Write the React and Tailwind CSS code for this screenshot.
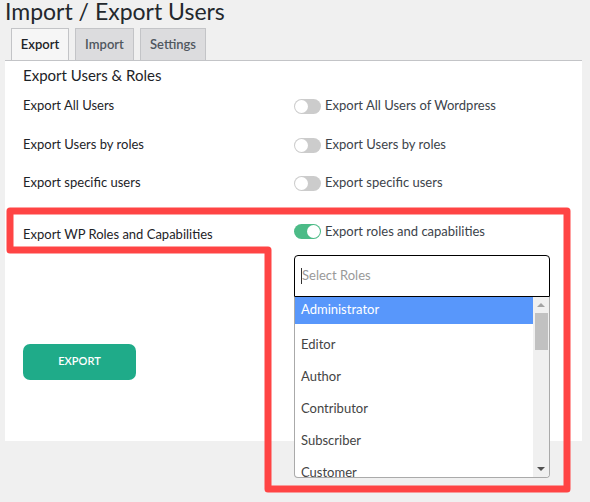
import React from 'react';

const font = { fontFamily: 'Lato, "Noto Sans", Arial, sans-serif' };

function Toggle({ on }) {
    return (
        <span className={'relative inline-block w-[27px] h-[15px] rounded-full shrink-0 ' + (on ? 'bg-[#4cbb87]' : 'bg-[#cccccc]')}>
            <span className={'absolute top-[1px] w-[13px] h-[13px] rounded-full bg-white ' + (on ? 'right-[1px]' : 'left-[1px]')} />
        </span>
    );
}

function Option({ label, text }) {
    return (
        <div className='flex items-center h-[32px]'>
            <span className='w-[271px] shrink-0 text-[13px] text-[#1d2327]'>{label}</span>
            <span className='flex items-center gap-[4px] text-[13px] text-[#3c434a]'>
                <Toggle />
                {text}
            </span>
        </div>
    );
}

const roles = ['Editor', 'Author', 'Contributor', 'Subscriber', 'Customer'];

export default function App() {
    return (
        <div className='relative w-[590px] h-[502px] overflow-hidden bg-[#f0f0f0]' style={font}>
            <h1 className='pl-[5px] h-[28px] text-[23px] leading-[23px] text-[#23282d]'>Import / Export Users</h1>

            <div className='flex gap-[6px] pl-[11px] h-[32px]'>
                <div className='w-[58px] flex items-center justify-center border border-b-0 border-[#c3c4c7] bg-[#f6f6f6] text-[13px] font-semibold text-[#1d2327]'>Export</div>
                <div className='w-[59px] flex items-center justify-center border border-b-0 border-[#c3c4c7] bg-[#dcdcde] text-[13px] font-semibold text-[#50575e]'>Import</div>
                <div className='w-[66px] flex items-center justify-center border border-b-0 border-[#c3c4c7] bg-[#dcdcde] text-[13px] font-semibold text-[#50575e]'>Settings</div>
            </div>

            <div className='ml-[5px] w-[577px] h-[381px] bg-white border-t border-[#c3c4c7] pl-[18px]'>
                <div className='h-[28px] flex items-center text-[15px] text-[#1d2327]'>Export Users &amp; Roles</div>

                <div className='mt-[1px]'>
                    <Option label='Export All Users' text='Export All Users of Wordpress' />
                </div>
                <div className='mt-[7px]'>
                    <Option label='Export Users by roles' text='Export Users by roles' />
                </div>
                <div className='mt-[6px]'>
                    <Option label='Export specific users' text='Export specific users' />
                </div>

                <div className='flex mt-[19px]'>
                    <div className='w-[271px] shrink-0 pt-[7px]'>
                        <div className='text-[13px] text-[#1d2327]'>Export WP Roles and Capabilities</div>
                        <button type='button' className='mt-[99px] w-[113px] h-[36px] rounded-[7px] bg-[#1fab89] text-white text-[11px] font-semibold uppercase'>Export</button>
                    </div>
                    <div className='w-[256px] pt-[4px]'>
                        <div className='flex items-center gap-[4px] text-[13px] text-[#3c434a]'>
                            <Toggle on />
                            Export roles and capabilities
                        </div>
                        <div className='relative mt-[13px]'>
                            <div className='h-[42px] border border-black rounded-t-[4px] flex items-center pl-[6px] bg-white'>
                                <span className='w-px h-[16px] bg-[#333]' />
                                <span className='text-[13px] text-[#999]'>Select Roles</span>
                            </div>
                            <div className='absolute left-0 top-full w-[256px] h-[181px] border border-t-0 border-[#aaaaaa] rounded-b-[4px] bg-white flex overflow-hidden z-10'>
                                <div className='flex-1'>
                                    <div className='h-[27px] flex items-center pl-[6px] bg-[#5897fb] text-white text-[13px]'>Administrator</div>
                                    <div className='mt-[5px]'>
                                        {roles.map((r) => (
                                            <div key={r} className='h-[32px] flex items-center pl-[6px] text-[13px] text-[#444]'>{r}</div>
                                        ))}
                                    </div>
                                </div>
                                <div className='w-[16px] bg-[#f0f0f0] flex flex-col items-center'>
                                    <div className='h-[16px] flex items-center justify-center'>
                                        <span className='w-0 h-0 border-l-[4px] border-r-[4px] border-b-[4px] border-l-transparent border-r-transparent border-b-[#a3a3a3]' />
                                    </div>
                                    <div className='w-[13px] h-[37px] bg-[#c1c1c1]' />
                                    <div className='flex-1' />
                                    <div className='h-[16px] flex items-center justify-center'>
                                        <span className='w-0 h-0 border-l-[4px] border-r-[4px] border-t-[4px] border-l-transparent border-r-transparent border-t-[#505050]' />
                                    </div>
                                </div>
                            </div>
                        </div>
                    </div>
                </div>
            </div>

            <svg className='absolute inset-0 pointer-events-none z-20' width='590' height='502' viewBox='0 0 590 502'>
                <path d='M10 211 H567 V489 H268 V250 H10 Z' fill='none' stroke='#ff4444' strokeWidth='7' strokeLinejoin='round' />
            </svg>
        </div>
    );
}
